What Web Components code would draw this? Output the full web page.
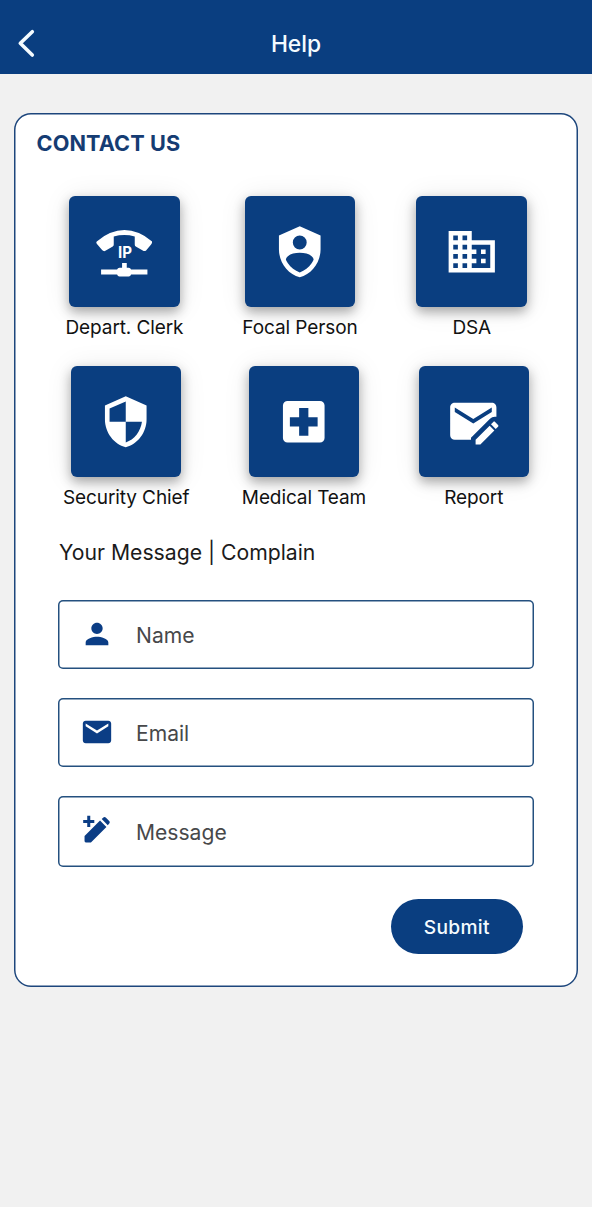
<!DOCTYPE html>
<html lang="en">
<head>
<meta charset="utf-8">
<title>Help</title>
<style>
html{background:#f1f1f1}
body{margin:0;font-family:Inter,"Liberation Sans",sans-serif;color:#111}
</style>
</head>
<body>
<help-page></help-page>
<script>
const BLUE = '#0a3e80';
const ICONS = {
  phone: ['140.75 130.75 166.5 166.5', `<path d="M140 183Q181 149 223 149Q265 149 306 183Q307 187 303 192L288 210Q283 213 278 210L257 198Q254 196 254 192V168Q223 160 191 168V192Q191 196 188 198L166 211Q161 214 156 209L140 190Q137 186 140 183Z"/><path d="M153 267H201Q203 262 208 262H216V248H230V262H236Q241 262 243 267H292V282H243Q241 288 236 288H208Q203 288 201 282H153Z"/><text x="204" y="234" font-size="46" font-weight="700" textLength="42" lengthAdjust="spacingAndGlyphs">IP</text>`],
  account: ['0 0 24 24', `<path fill-rule="evenodd" d="M12 1L3 5V11C3 16.55 6.84 21.74 12 23C17.16 21.74 21 16.55 21 11V5L12 1M12 5A3 3 0 0 1 15 8A3 3 0 0 1 12 11A3 3 0 0 1 9 8A3 3 0 0 1 12 5M17.13 17C15.92 18.85 14.11 20.24 12 20.92C9.89 20.24 8.08 18.85 6.87 17C6.53 16.5 6.24 16 6 15.47C6 13.82 8.71 12.47 12 12.47C15.29 12.47 18 13.79 18 15.47C17.76 16 17.47 16.5 17.13 17Z"/>`],
  building: ['0 0 24 24', `<path d="M12 7V3H2v18h20V7H12zM6 19H4v-2h2v2zm0-4H4v-2h2v2zm0-4H4V9h2v2zm0-4H4V5h2v2zm4 12H8v-2h2v2zm0-4H8v-2h2v2zm0-4H8V9h2v2zm0-4H8V5h2v2zm10 12h-8v-2h2v-2h-2v-2h2v-2h-2V9h8v10zm-2-8h-2v2h2v-2zm0 4h-2v2h2v-2z"/>`],
  shield: ['0 0 24 24', `<path fill-rule="evenodd" d="M12 12H19C18.47 16.11 15.72 19.78 12 20.92V12H5V6.3L12 3.19ZM12 1L3 5V11C3 16.55 6.84 21.73 12 23C17.16 21.73 21 16.55 21 11V5L12 1Z"/>`],
  medical: ['0 0 24 24', `<path fill-rule="evenodd" d="M18 14H14V18H10V14H6V10H10V6H14V10H18ZM19 3H5A2 2 0 0 0 3 5V19A2 2 0 0 0 5 21H19A2 2 0 0 0 21 19V5A2 2 0 0 0 19 3Z"/>`],
  report: ['0.2 0.2 24 24', `<path fill-rule="evenodd" d="M4 4C2.89 4 2 4.89 2 6V18A2 2 0 0 0 4 20H11V19.11L19.24 10.89C19.8 10.32 20.55 10 21.35 10C21.57 10 21.79 10.03 22 10.08V6C22 4.89 21.1 4 20 4H4M4 6L12 11L20 6V8L12 13L4 8V6Z"/><path d="M21.04 12.13C20.9 12.13 20.76 12.19 20.65 12.3L19.65 13.3L21.7 15.35L22.7 14.35C22.92 14.14 22.92 13.79 22.7 13.58L21.42 12.3C21.31 12.19 21.18 12.13 21.04 12.13M19.07 13.88L13 19.94V22H15.06L21.12 15.93Z"/>`],
  person: ['0 0 24 24', `<path d="M12 12c2.21 0 4-1.79 4-4s-1.79-4-4-4-4 1.79-4 4 1.79 4 4 4zm0 2c-2.67 0-8 1.34-8 4v2h16v-2c0-2.66-5.33-4-8-4z"/>`],
  mail: ['0 0 24 24', `<path d="M20 4H4c-1.1 0-2 .9-2 2v12c0 1.1.9 2 2 2h16c1.1 0 2-.9 2-2V6c0-1.1-.9-2-2-2zm0 4l-8 5-8-5V6l8 5 8-5v2z"/>`],
  pencil: ['88.5 372.5 101 101', `<path d="M110 378H119V390H131V399H119V411H110V399H98V390H110ZM102 438L148 392L167 411L121 457H106Q102 457 102 453ZM153 387L159 382Q162 380 165 383L176 394Q178 397 176 400L171 406Z"/>`],
  back: ['0 0 18 30', `<path fill="none" stroke="currentColor" stroke-width="3.6" stroke-linecap="round" stroke-linejoin="round" d="M14.3 2.7L2.3 14.2L14.3 26"/>`]
};
function define(name, render){
  customElements.define(name, class extends HTMLElement{
    connectedCallback(){
      if(this.shadowRoot) return;
      const t = document.createElement('template');
      t.innerHTML = render(this);
      this.attachShadow({mode:'open'}).append(t.content.cloneNode(true));
    }
  });
}
define('app-icon', el => {
  const [box, body] = ICONS[el.getAttribute('name')];
  return `<style>:host{display:block;flex:none}svg{display:block;width:100%;height:100%;overflow:visible;fill:currentColor}</style><svg viewBox="${box}" aria-hidden="true">${body}</svg>`;
});
define('app-header', () => `<style>
:host{display:grid;grid-template-columns:1fr auto 1fr;align-items:center;box-sizing:border-box;height:73.5px;padding-top:14px;background:${BLUE};color:#f4fbff}
app-icon{width:18px;height:30px;margin-left:18px}
h1{margin:0;font-size:22.8px;line-height:28px;font-weight:500}
</style><app-icon name="back"></app-icon><h1><slot></slot></h1>`);
define('contact-tile', el => `<style>
:host{display:flex;flex-direction:column;align-items:center;flex:none;white-space:nowrap}
.tile{width:110.5px;height:110.5px;border-radius:6px;background:${BLUE};color:#fff;display:grid;place-items:center;box-shadow:0 5px 12px rgba(0,0,0,.32),0 2px 28px rgba(0,0,0,.09)}
app-icon{width:55.5px;height:55.5px;margin:0 var(--icon-shift,0px) 0 0}
.label{margin-top:9px;font-size:19px;line-height:24px;letter-spacing:-.1px}
</style><div class="tile"><app-icon name="${el.getAttribute('icon')}"></app-icon></div><div class="label"><slot></slot></div>`);
define('contact-row', () => `<style>:host{display:flex;justify-content:space-between;height:170px}</style><slot></slot>`);
define('form-field', el => `<style>
:host{display:flex;align-items:center;box-sizing:border-box;height:69.5px;padding-left:21.5px;border-radius:5px;box-shadow:inset 0 0 0 1.5px #24507f}
app-icon{width:34px;height:34px;color:#0b3d85;margin-top:-1px}
span{margin-left:22.5px;padding-top:2.6px;font-size:21.1px;line-height:26px;color:#47484a}
</style><app-icon name="${el.getAttribute('icon')}"></app-icon><span><slot></slot></span>`);
define('submit-button', () => `<style>
:host{display:block}
button{display:block;width:132.5px;height:55.5px;border:0;border-radius:28px;background:${BLUE};color:#f4fbff;font:500 19.2px/24px Inter,sans-serif;letter-spacing:.3px;padding:1px 0 0}
</style><button type="button"><slot></slot></button>`);
define('contact-card', () => `<style>
:host{display:block;box-sizing:border-box;height:874px;margin:39.5px 14px 0;padding-top:16px;border-radius:17px;background:#fff;box-shadow:inset 0 0 0 1.5px #1d467c}
h2{margin:0 0 0 22.5px;font-size:21.7px;line-height:28px;font-weight:650;color:#153c73;letter-spacing:.1px}
.r1{margin:39px 51px 0 51.5px}
.r2{margin:0 49px 0 49px;--icon-shift:1px}
h3{margin:2px 0 0 45px;font-size:21.2px;line-height:28px;font-weight:400;color:#1b1b1b}
form{display:flex;flex-direction:column;gap:28.7px;margin:33.5px 44px 0}
.msg{height:71px}
submit-button{align-self:flex-end;margin:3.2px 11px 0 0}
</style>
<h2>CONTACT US</h2>
<contact-row class="r1"><contact-tile icon="phone">Depart. Clerk</contact-tile><contact-tile icon="account">Focal Person</contact-tile><contact-tile icon="building">DSA</contact-tile></contact-row>
<contact-row class="r2"><contact-tile icon="shield">Security Chief</contact-tile><contact-tile icon="medical">Medical Team</contact-tile><contact-tile icon="report">Report</contact-tile></contact-row>
<h3>Your Message | Complain</h3>
<form><form-field icon="person">Name</form-field><form-field icon="mail">Email</form-field><form-field class="msg" icon="pencil">Message</form-field><submit-button>Submit</submit-button></form>`);
define('help-page', () => `<style>:host{display:flow-root;min-height:1207px;background:#f1f1f1}</style><app-header>Help</app-header><contact-card></contact-card>`);
</script>
</body>
</html>
